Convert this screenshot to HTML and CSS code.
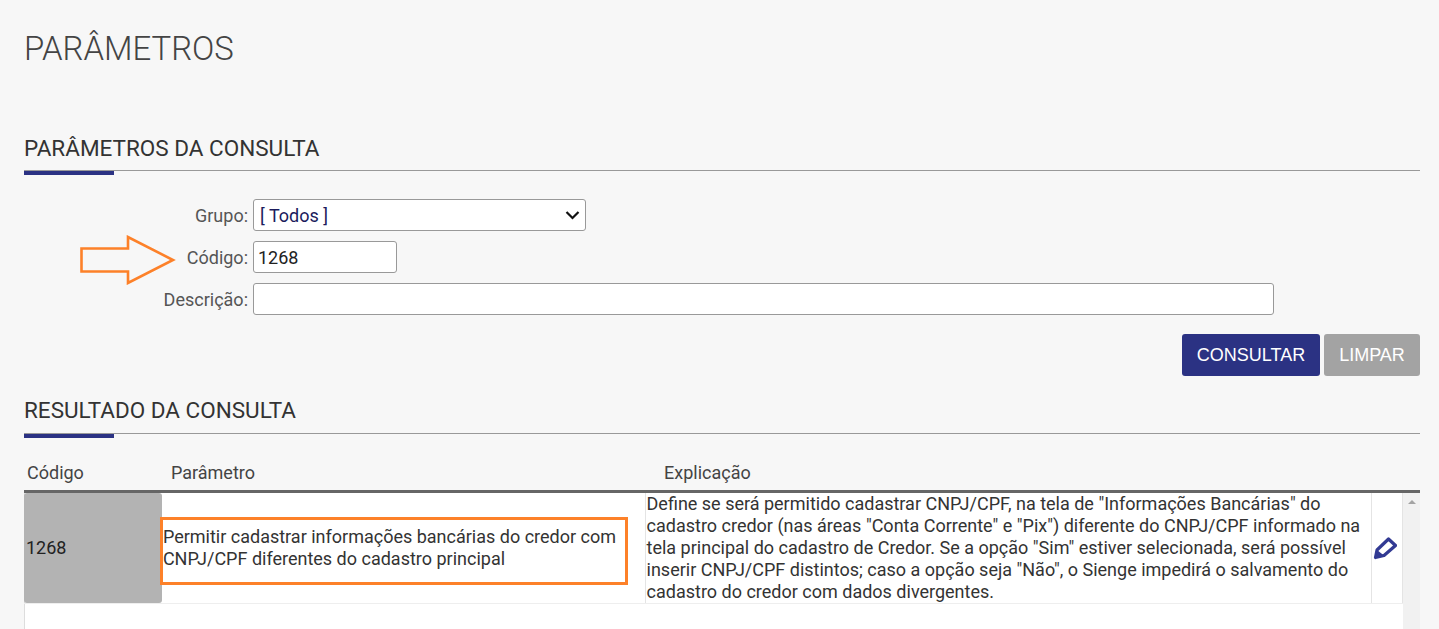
FILE: index.html
```html
<!DOCTYPE html>
<html lang="pt-BR">
<head>
    <meta charset="UTF-8">
    <title>Parâmetros</title>
    <link rel="stylesheet" href="styles.css">
</head>
<body>
    <h1 class="page-title">PARÂMETROS</h1>

    <section class="query">
        <h2 class="section-title">PARÂMETROS DA CONSULTA</h2>
        <form class="query-form">
            <div class="field">
                <label for="grupo">Grupo:</label>
                <div class="select-box" id="grupo">
                    <span>[ Todos ]</span>
                    <svg class="chevron" width="15" height="10" viewBox="0 0 15 10"><path d="M1.5 2 7.500 8l6-6" fill="none" stroke="#111" stroke-width="2.200"/></svg>
                </div>
            </div>
            <div class="field">
                <label for="codigo">Código:</label>
                <input class="input-code" type="text" id="codigo" value="1268">
                <!-- orange arrow annotation -->
                <svg class="arrow-note" width="96" height="50" viewBox="0 0 96 50"><path d="M1.500 13.500H48V2L93 25 48 48V36.500H1.500Z" fill="none" stroke="#fd8129" stroke-width="2.600"/></svg>
            </div>
            <div class="field">
                <label for="descricao">Descrição:</label>
                <input class="input-desc" type="text" id="descricao">
            </div>
            <div class="buttons">
                <button class="btn btn-primary" type="button">CONSULTAR</button>
                <button class="btn btn-muted" type="button">LIMPAR</button>
            </div>
        </form>
    </section>

    <section class="result">
        <h2 class="section-title">RESULTADO DA CONSULTA</h2>
        <div class="result-head">
            <div class="col-code">Código</div>
            <div class="col-param">Parâmetro</div>
            <div class="col-expl">Explicação</div>
        </div>
        <div class="result-body">
            <div class="rows">
                <div class="row">
                    <div class="cell-code">1268</div>
                    <div class="cell-param">
                        Permitir cadastrar informações bancárias do credor com CNPJ/CPF diferentes do cadastro principal
                        <div class="highlight-note"></div>
                    </div>
                    <div class="cell-expl">Define se será permitido cadastrar CNPJ/CPF, na tela de "Informações Bancárias" do cadastro credor (nas áreas "Conta Corrente" e "Pix") diferente do CNPJ/CPF informado na tela principal do cadastro de Credor. Se a opção "Sim" estiver selecionada, será possível inserir CNPJ/CPF distintos; caso a opção seja "Não", o Sienge impedirá o salvamento do cadastro do credor com dados divergentes.</div>
                    <div class="cell-action">
                        <svg width="24" height="24" viewBox="0 0 24 24"><path d="M2.500 21.500 4 14 15.500 3 22.500 9.500 11 19.500Z" fill="none" stroke="#323a93" stroke-width="3.200" stroke-linejoin="round"/><path d="M2.500 21.500 4 14 11 19.500Z" fill="#323a93"/></svg>
                    </div>
                </div>
            </div>
            <div class="scrollbar"><span class="scroll-up"></span></div>
        </div>
    </section>
</body>
</html>
```

FILE: styles.css
```css
html, body {
    height: 100%;
    overflow: hidden;
}
body {
    margin: 0;
    padding: 0 19px 0 24px;
    background-color: #f7f7f7;
    color: #333;
    font-family: 'Roboto', sans-serif;
    font-size: 18px;
}
.page-title {
    margin: 0;
    padding-top: 30px;
    font-size: 32.900px;
    line-height: 38px;
    font-weight: 300;
    color: #444;
}
.query {
    margin-top: 61px;
}
.section-title {
    margin: 0;
    height: 42px;
    line-height: 38px;
    font-size: 22.500px;
    font-weight: 400;
    color: #333;
    border-bottom: 1px solid #999;
    position: relative;
    box-sizing: border-box;
}
.section-title::after {
    content: "";
    position: absolute;
    left: 0;
    bottom: -5px;
    width: 90px;
    height: 4px;
    background: #2b3283;
}
.query-form {
    padding-top: 28px;
}
.field {
    display: flex;
    align-items: center;
    height: 32px;
    margin-bottom: 10px;
    position: relative;
}
.field label {
    width: 224px;
    text-align: right;
    margin-right: 5px;
    color: #555;
}
.select-box, .field input {
    box-sizing: border-box;
    height: 32px;
    background: #fff;
    border: 1px solid #999;
    border-radius: 3px;
    font-family: 'Roboto', sans-serif;
    font-size: 18px;
    color: #222;
}
.select-box {
    width: 333px;
    display: flex;
    align-items: center;
    justify-content: space-between;
    padding: 0 5px 0 6px;
    color: #1b1b5c;
}
.field input {
    padding: 0 4px;
    outline: none;
}
.input-code {
    width: 144px;
}
.input-desc {
    width: 1021px;
}
.arrow-note {
    position: absolute;
    left: 56px;
    top: -6px;
}
.buttons {
    display: flex;
    justify-content: flex-end;
    gap: 4px;
    margin-top: 19px;
}
.btn {
    height: 42px;
    border: none;
    border-radius: 3px;
    color: #fff;
    font-family: 'Liberation Sans', sans-serif;
    font-size: 18px;
}
.btn-primary {
    width: 138px;
    background: #2b3283;
}
.btn-muted {
    width: 96px;
    background: #a3a3a3;
}
.result {
    margin-top: 16px;
}
.result .section-title {
    line-height: 36px;
}
.result-head {
    display: flex;
    height: 59px;
    box-sizing: border-box;
    padding-top: 29px;
    line-height: 20px;
    color: #444;
    border-bottom: 3px solid #666;
}
.col-code {
    width: 147px;
    padding-left: 3px;
    box-sizing: border-box;
}
.col-param {
    width: 493px;
}
.result-body {
    display: flex;
    height: 140px;
}
.rows {
    width: 1379px;
    background: #fff;
    border-left: 1px solid #ddd;
    box-sizing: border-box;
}
.row {
    display: flex;
    height: 110px;
    margin-left: -1px;
    border-bottom: 1px solid #eee;
    box-sizing: content-box;
    line-height: 22px;
    color: #333;
}
.cell-code {
    width: 138px;
    display: flex;
    align-items: center;
    padding-left: 2px;
    box-sizing: border-box;
    background: #b3b3b3;
    border-radius: 3px;
    color: #222;
}
.cell-param {
    width: 484px;
    display: flex;
    align-items: center;
    padding: 0 20px 0 1px;
    box-sizing: border-box;
    position: relative;
    border-right: 1px solid #e4e4e4;
}
.highlight-note {
    position: absolute;
    left: -2px;
    top: 24px;
    width: 468px;
    height: 68px;
    box-sizing: border-box;
    border: 3px solid #fd8129;
}
.cell-expl {
    width: 727px;
    padding: 0 10px 0 1px;
    box-sizing: border-box;
    display: flex;
    align-items: center;
    border-right: 1px solid #e4e4e4;
}
.cell-action {
    width: 31px;
    display: flex;
    align-items: center;
    justify-content: center;
    padding-right: 5px;
    box-sizing: border-box;
    border-right: 1px solid #e4e4e4;
}
.scrollbar {
    width: 17px;
    background: #f1f1f1;
    position: relative;
}
.scroll-up {
    position: absolute;
    left: 5px;
    top: 7px;
    border-left: 4px solid transparent;
    border-right: 4px solid transparent;
    border-bottom: 4px solid #a3a3a3;
}
```
